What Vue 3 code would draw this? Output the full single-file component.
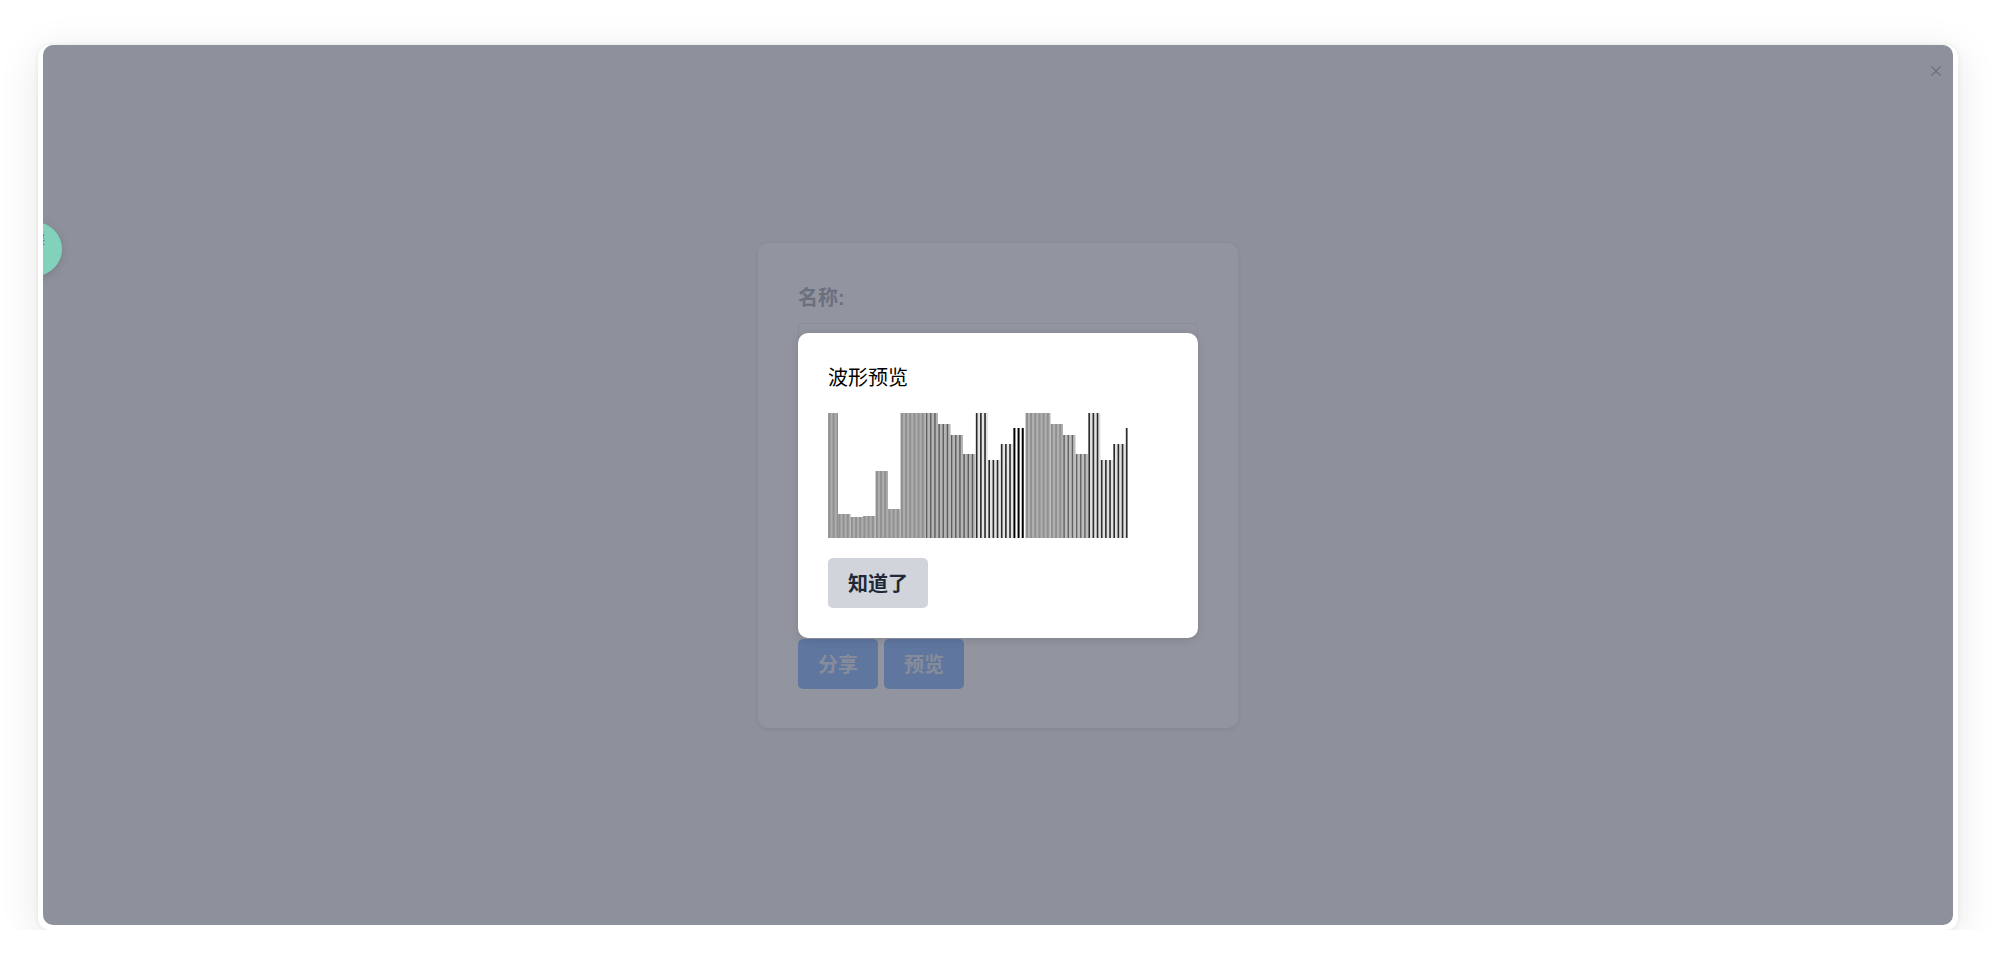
<script setup>
const WAVE_W = 300
const WAVE_H = 125
const PITCH = 12.5 / 3

// bar height per step of the preview
const heights = [125, 24, 21, 22, 67, 29, 125, 125, 125, 114, 103, 84, 125, 78, 94, 110, 125, 125, 114, 103, 84, 125, 78, 94, 110]

function grey(v) {
  return `rgb(${v},${v},${v})`
}

// the lines start out soft and get crisper along the wave, twice over
function tone(x) {
  if (x < 100) return [0x90, 0xac, 2]
  if (x < 147) return [0x5c, 0xb4, 1.4]
  if (x < 180) return [0x28, 0xe4, 1.6]
  if (x < 197.5) return [0x00, 0xff, 2]
  if (x < 235) return [0x90, 0xb0, 2]
  if (x < 265) return [0x60, 0xbc, 1.4]
  return [0x2c, 0xe0, 1.6]
}

const steps = []
const lines = []
heights.forEach((h, i) => {
  const x0 = i === 0 ? 0 : 10 + (i - 1) * 12.5
  const x1 = Math.min(WAVE_W, 10 + i * 12.5)
  const [dark, light, width] = tone((x0 + x1) / 2)
  const y = WAVE_H - h
  steps.push({ x: x0, y, w: x1 - x0, h, fill: grey(light) })
  for (let x = x0 + 0.4; x < x1; x += PITCH) {
    lines.push({ x, y, w: Math.min(width, x1 - x), h, fill: grey(dark) })
  }
})
</script>

<template>
  <div class="card">
    <div class="stage">
      <div class="tab">展</div>

      <div class="form">
        <div class="label">名称:</div>
        <div class="input"></div>
        <div class="actions">
          <button class="btn-blue">分享</button>
          <button class="btn-blue">预览</button>
        </div>
      </div>

      <div class="mask">
        <div class="modal">
          <div class="title">波形预览</div>
          <svg class="wave" :width="WAVE_W" :height="WAVE_H" :viewBox="`0 0 ${WAVE_W} ${WAVE_H}`">
            <rect v-for="(s, i) in steps" :key="'s' + i" :x="s.x" :y="s.y" :width="s.w" :height="s.h" :fill="s.fill" />
            <rect v-for="(l, i) in lines" :key="'l' + i" :x="l.x" :y="l.y" :width="l.w" :height="l.h" :fill="l.fill" />
          </svg>
          <button class="btn-ok">知道了</button>
        </div>
      </div>

      <svg class="close" width="12" height="12" viewBox="0 0 12 12">
        <path d="M1.5 1.5l9 9M10.5 1.5l-9 9" stroke="#6c7180" stroke-width="1.2" fill="none" />
      </svg>
    </div>
  </div>
</template>

<style>
html,
body {
  margin: 0;
  background: #fff;
}
</style>

<style scoped>
.card {
  width: 1920px;
  height: 885px;
  margin: 45px 38px 0;
  padding: 0 5px 5px;
  box-sizing: border-box;
  background: #fff;
  border-radius: 12px;
  box-shadow: 0 8px 40px rgba(0, 0, 0, 0.1), 0 0 5px rgba(0, 0, 0, 0.08);
  font-family: "Liberation Sans", "Noto Sans CJK SC", sans-serif;
}
.stage {
  position: relative;
  height: 880px;
  display: flex;
  align-items: center;
  justify-content: center;
  background: #f6f7f9;
  border-radius: 10px;
  overflow: hidden;
}
.form {
  width: 480px;
  height: 485px;
  padding: 41px 40px 39px;
  box-sizing: border-box;
  display: flex;
  flex-direction: column;
  background: #fff;
  border-radius: 10px;
  box-shadow: 0 1px 4px rgba(0, 0, 0, 0.08);
}
.label {
  font-size: 20px;
  line-height: 28px;
  font-weight: bold;
  color: #b8bcc6;
}
.input {
  flex: 1;
  margin: 11px 0 20px;
  border: 1px solid #f0f1f4;
  border-radius: 4px;
}
.actions {
  display: flex;
  gap: 6px;
}
.btn-blue {
  width: 80px;
  height: 50px;
  padding: 0;
  border: none;
  border-radius: 5px;
  background: #a2c7ff;
  color: #eceef8;
  font: bold 20px "Liberation Sans", "Noto Sans CJK SC", sans-serif;
}
.mask {
  position: absolute;
  inset: 0;
  z-index: 2;
  display: flex;
  align-items: center;
  justify-content: center;
  background: rgba(13, 21, 42, 0.45);
}
.modal {
  width: 400px;
  height: 305px;
  padding: 30px;
  box-sizing: border-box;
  background: #fff;
  border-radius: 10px;
  box-shadow: 0 2px 8px rgba(0, 0, 0, 0.12);
}
.title {
  font-size: 20px;
  line-height: 30px;
  color: #000;
  margin-bottom: 20px;
}
.wave {
  display: block;
  margin-bottom: 20px;
}
.btn-ok {
  display: block;
  width: 100px;
  height: 50px;
  padding: 0;
  border: none;
  border-radius: 5px;
  background: #d1d5db;
  color: #1f2937;
  font: bold 20px "Liberation Sans", "Noto Sans CJK SC", sans-serif;
}
.tab {
  position: absolute;
  left: -35px;
  top: 177px;
  z-index: 3;
  width: 54px;
  height: 54px;
  padding-left: 25px;
  box-sizing: border-box;
  border-radius: 50%;
  background: #82d2bb;
  box-shadow: 0 2px 8px rgba(0, 0, 0, 0.15);
  color: #5f6b72;
  font-size: 12px;
  line-height: 36px;
}
.close {
  position: absolute;
  top: 20px;
  right: 11px;
  z-index: 3;
}
</style>
